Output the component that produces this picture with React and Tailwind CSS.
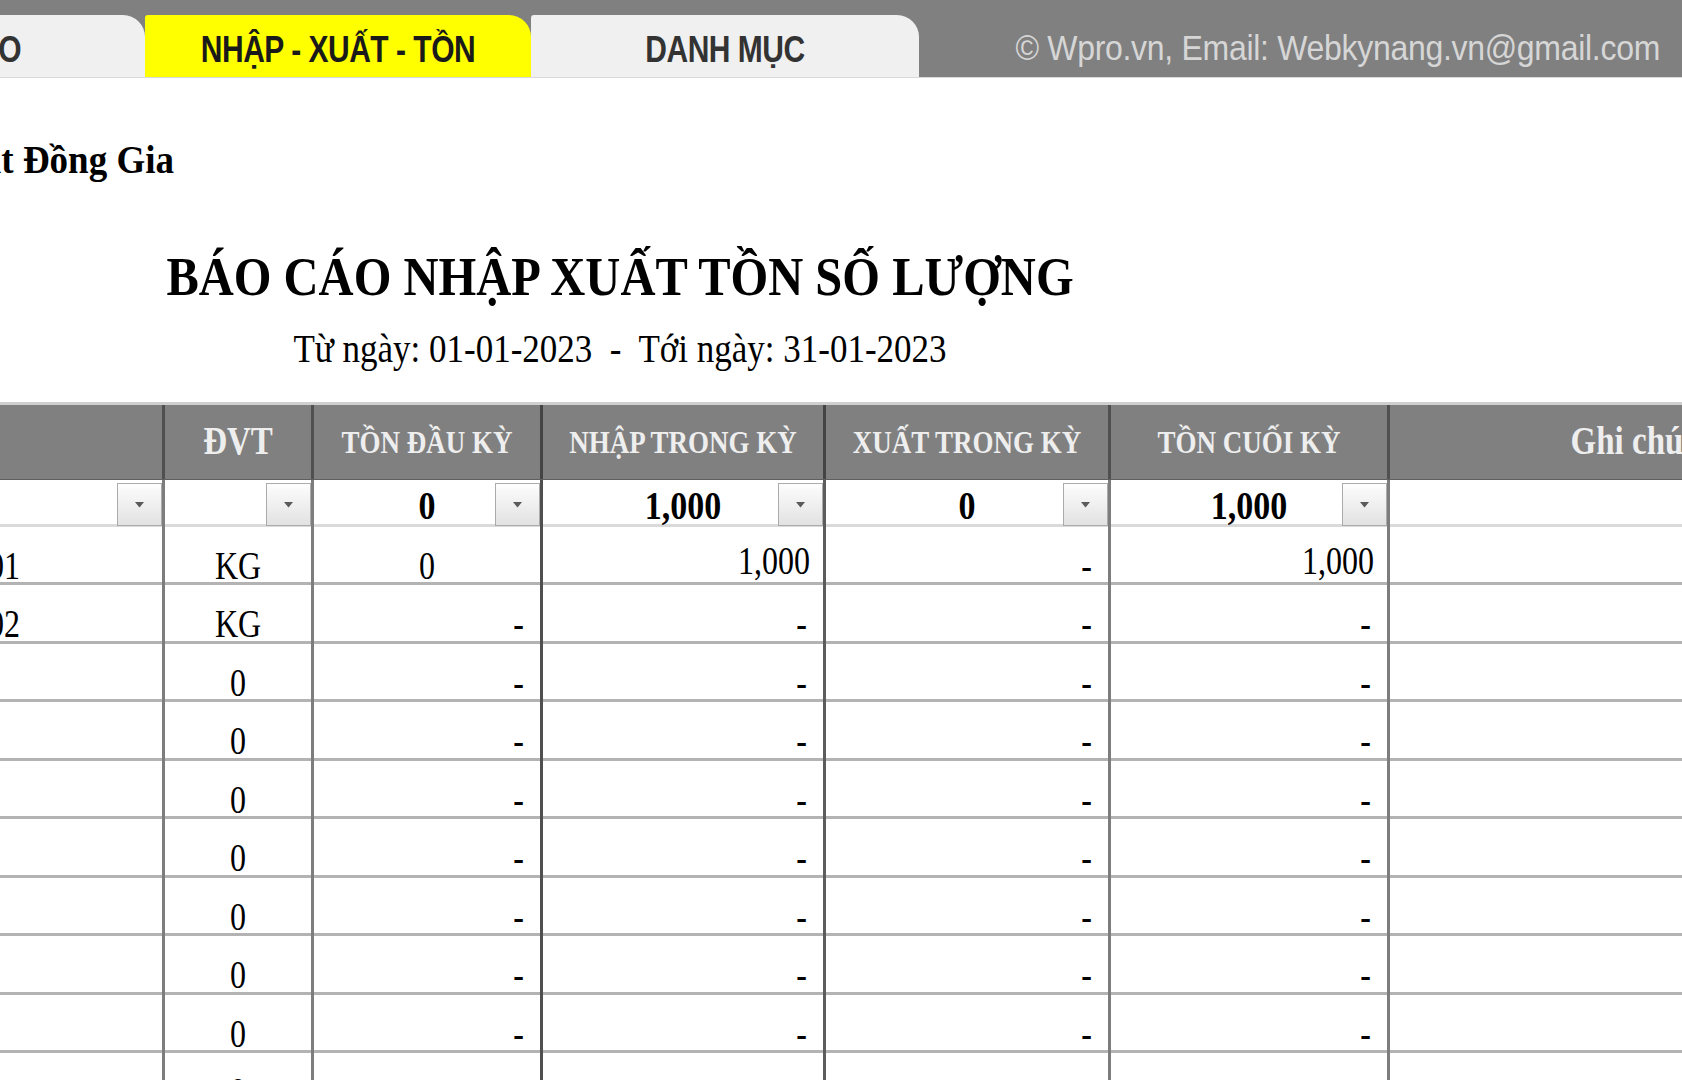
import React from "react";

const grid = "grid grid-cols-[165px_149px_229px_283px_285px_279px_474px] w-[1864px]";

// vertical lines between the columns (right border of each cell)
const lines = [
  "border-r-[3px] border-[#7d7d7d]",
  "border-r-[3px] border-[#7d7d7d]",
  "border-r-[3px] border-[#4f4f4f]",
  "border-r-[3px] border-[#5c5c5c]",
  "border-r-[3px] border-[#7d7d7d]",
  "border-r-[3px] border-[#7d7d7d]",
  "",
];

const headLines = [
  "border-r-[3px] border-[#505050]",
  "border-r-[3px] border-[#505050]",
  "border-r-[3px] border-[#444444]",
  "border-r-[3px] border-[#444444]",
  "border-r-[3px] border-[#505050]",
  "border-r-[3px] border-[#505050]",
  "",
];

const rows = [
  { code: "MH01", dvt: "KG", a: "0", b: "1,000", c: "-", d: "1,000", first: true },
  { code: "MH02", dvt: "KG", a: "-", b: "-", c: "-", d: "-" },
  { code: "", dvt: "0", a: "-", b: "-", c: "-", d: "-" },
  { code: "", dvt: "0", a: "-", b: "-", c: "-", d: "-" },
  { code: "", dvt: "0", a: "-", b: "-", c: "-", d: "-" },
  { code: "", dvt: "0", a: "-", b: "-", c: "-", d: "-" },
  { code: "", dvt: "0", a: "-", b: "-", c: "-", d: "-" },
  { code: "", dvt: "0", a: "-", b: "-", c: "-", d: "-" },
  { code: "", dvt: "0", a: "-", b: "-", c: "-", d: "-" },
  { code: "", dvt: "0", a: "-", b: "-", c: "-", d: "-" },
];

const Tab = ({ className, children }) => (
  <div className={`h-[62px] pt-[6px] flex items-center justify-center rounded-tr-[22px] rounded-tl-[3px] ${className}`}>
    <span className="inline-block scale-y-120 whitespace-nowrap font-['Liberation_Sans',sans-serif] font-bold text-[30px] tracking-[-0.5px]">
      {children}
    </span>
  </div>
);

const Drop = () => (
  <div className="absolute right-0 top-[3px] w-[45px] h-[43px] border border-[#ababab] bg-linear-to-b from-[#fdfdfd] to-[#e2e2e2] flex items-center justify-center">
    <svg width="9" height="6" viewBox="0 0 9 6">
      <path d="M0 0h9L4.5 5.5z" fill="#5a5a5a" />
    </svg>
  </div>
);

const Num = ({ value, top, center }) => {
  const dash = value === "-";
  return (
    <div
      className={`h-full flex items-center ${center ? "justify-center" : "justify-end"} ${
        top ? "pt-[4px]" : "pt-[14px]"
      } ${center ? "" : dash ? "pr-[16px]" : "pr-[13px]"}`}
    >
      <span className="inline-block scale-y-125">{value}</span>
    </div>
  );
};

export default function App() {
  return (
    <div className="w-[1682px] h-[1080px] overflow-hidden bg-white relative font-['Liberation_Serif',serif] text-black">
      {/* Sheet tabs */}
      <div className="h-[78px] bg-[#808080] flex items-end border-b border-[#d9d9d9]">
        <div className="flex items-end -ml-[241px]">
          <Tab className="w-[386px] bg-[#f0f0f0] text-[#333333]">BÁO CÁO</Tab>
          <Tab className="w-[386px] bg-[#ffff00] text-[#1a1a1a]">NHẬP - XUẤT - TỒN</Tab>
          <Tab className="w-[388px] bg-[#f0f0f0] text-[#333333]">DANH MỤC</Tab>
        </div>
        <div className="ml-auto mr-[22px] h-[62px] pt-[4px] flex items-center whitespace-nowrap font-['Liberation_Sans',sans-serif] text-[32px] text-[#d6d6d6] tracking-[-0.3px]">
          <span className="inline-block scale-y-110">© Wpro.vn, Email: Webkynang.vn@gmail.com</span>
        </div>
      </div>

      {/* Company */}
      <div className="pt-[62px] w-[174px] h-[102px] flex justify-end whitespace-nowrap">
        <span className="inline-block scale-y-110 font-bold text-[37px] leading-[40px]">Công ty Nhật Đồng Gia</span>
      </div>

      {/* Title */}
      <div className="w-[1240px] mt-[67px] text-center">
        <div className="h-[60px] leading-[60px] text-[48.5px] font-bold">
          <span className="inline-block scale-y-115">BÁO CÁO NHẬP XUẤT TỒN SỐ LƯỢNG</span>
        </div>
        <div className="mt-[20px] h-[44px] leading-[44px] text-[35px]">
          <span className="inline-block scale-y-115 whitespace-pre">Từ ngày: 01-01-2023  -  Tới ngày: 31-01-2023</span>
        </div>
      </div>

      {/* Table */}
      <div className="mt-[31px]">
        {/* Header */}
        <div className={`${grid} h-[78px] bg-[#808080] border-t-[3px] border-b border-[#cfcfcf] border-b-[#5f5f5f] text-[#eeeeee] font-bold`}>
          <div className={headLines[0]} />
          <div className={`${headLines[1]} flex items-center justify-center text-[33px]`}>
            <span className="inline-block scale-y-120">ĐVT</span>
          </div>
          <div className={`${headLines[2]} flex items-center justify-center text-[27px]`}>
            <span className="inline-block scale-y-120">TỒN ĐẦU KỲ</span>
          </div>
          <div className={`${headLines[3]} flex items-center justify-center text-[27px]`}>
            <span className="inline-block scale-y-120">NHẬP TRONG KỲ</span>
          </div>
          <div className={`${headLines[4]} flex items-center justify-center text-[27px]`}>
            <span className="inline-block scale-y-120">XUẤT TRONG KỲ</span>
          </div>
          <div className={`${headLines[5]} flex items-center justify-center text-[27px]`}>
            <span className="inline-block scale-y-120">TỒN CUỐI KỲ</span>
          </div>
          <div className="flex items-center justify-center text-[33px]">
            <span className="inline-block scale-y-120">Ghi chú</span>
          </div>
        </div>

        {/* Filter / totals row */}
        <div className={`${grid} h-[47px] border-b-[3px] border-[#dadada] font-bold text-[34px]`}>
          <div className={`${lines[0]} relative`}>
            <Drop />
          </div>
          <div className={`${lines[1]} relative`}>
            <Drop />
          </div>
          {["0", "1,000", "0", "1,000"].map((v, i) => (
            <div key={i} className={`${lines[i + 2]} relative flex items-center justify-center`}>
              <span className="inline-block scale-y-120">{v}</span>
              <Drop />
            </div>
          ))}
          <div />
        </div>

        {/* Data rows */}
        {rows.map((r, i) => (
          <div
            key={i}
            className={`${grid} ${i % 2 ? "h-[59px]" : "h-[58px]"} border-b-[3px] border-[#b3b3b3] text-[32px]`}
          >
            <div className={`${lines[0]} pt-[14px] flex items-center`}>
              <div className="w-[20px] flex justify-end whitespace-nowrap">
                <span className="inline-block scale-y-125">{r.code}</span>
              </div>
            </div>
            <div className={`${lines[1]} pt-[14px] flex items-center justify-center`}>
              <span className="inline-block scale-y-125">{r.dvt}</span>
            </div>
            <div className={lines[2]}>
              <Num value={r.a} center={r.first} />
            </div>
            <div className={lines[3]}>
              <Num value={r.b} top={r.first} />
            </div>
            <div className={lines[4]}>
              <Num value={r.c} />
            </div>
            <div className={lines[5]}>
              <Num value={r.d} top={r.first} />
            </div>
            <div />
          </div>
        ))}
      </div>
    </div>
  );
}
